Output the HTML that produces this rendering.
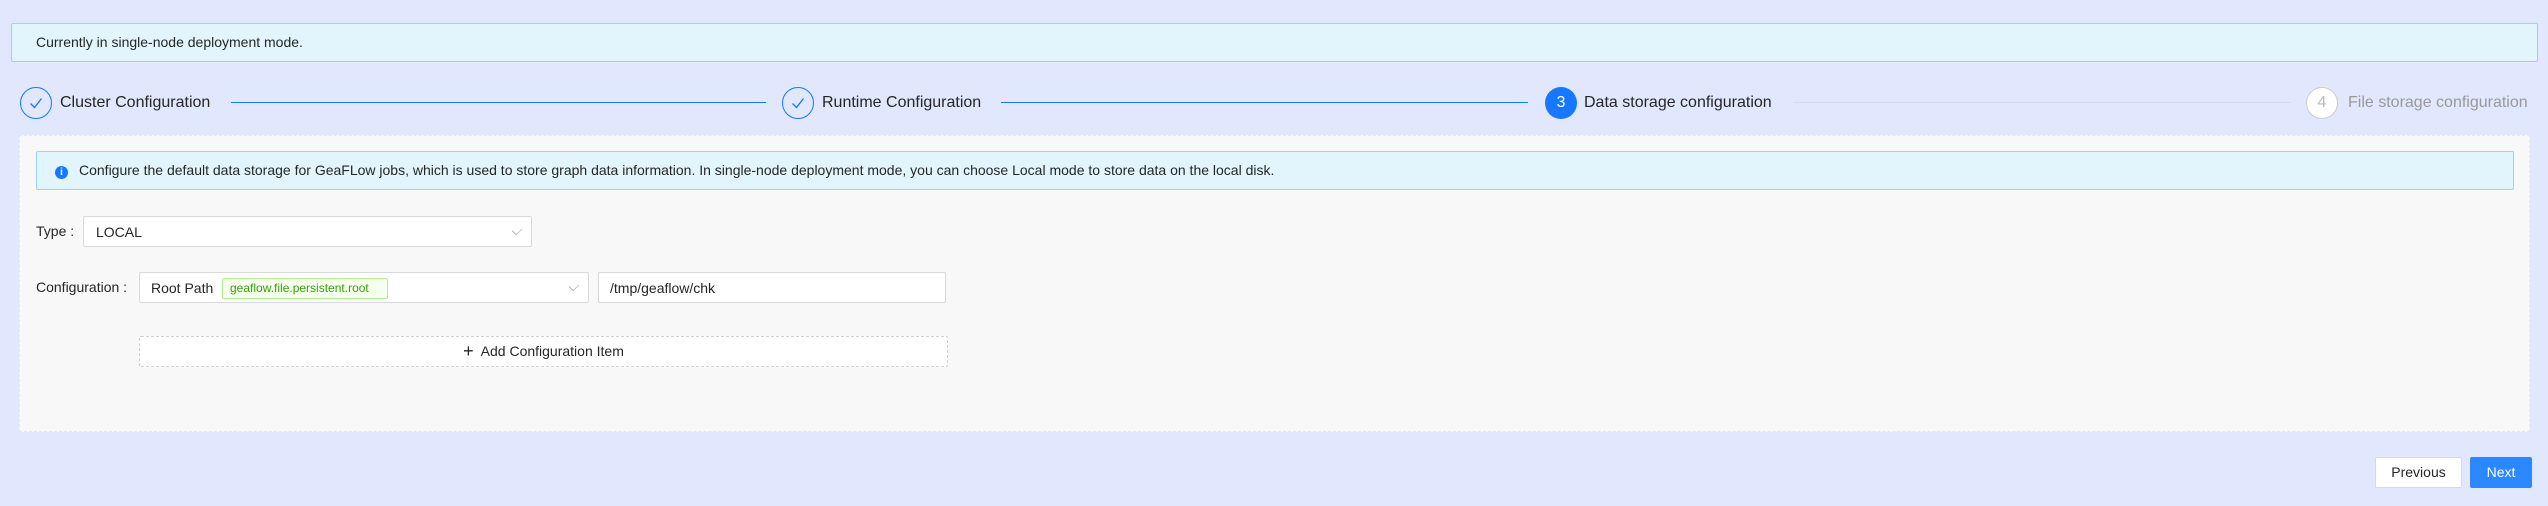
<!DOCTYPE html>
<html><head><meta charset="utf-8"><style>
*{box-sizing:border-box;margin:0;padding:0}
body{width:2548px;height:506px;background:#e1e7fd;font-family:"Liberation Sans",sans-serif;font-size:14px;color:#262626;position:relative;overflow:hidden}
.abs{position:absolute}
.alert{background:#e2f5fd;border:1px solid #91d5ff;border-radius:2px}
.circ{position:absolute;width:32px;height:32px;border-radius:50%;top:87px;text-align:center;line-height:30px;font-size:16px}
.st{position:absolute;top:92px;font-size:16px;line-height:22px}
.line{position:absolute;top:102px;height:1px}
.sel{position:absolute;background:#fff;border:1px solid #d9d9d9;border-radius:2px}
.arr{position:absolute;right:10px;top:9px;width:8px;height:8px;border-right:1px solid #bbb;border-bottom:1px solid #bbb;transform:rotate(45deg) scale(0.8,1.1)}
</style></head><body>
<div class="abs alert" style="left:11px;top:23px;width:2527px;height:39px;"><span class="abs" style="left:24px;top:10px">Currently in single-node deployment mode.</span></div>

<div class="circ" style="left:20px;border:1px solid #1677ff;color:#1677ff"><svg width="30" height="30" viewBox="0 0 30 30"><path d="M9.5 15.5l4 4 7-9" fill="none" stroke="#1677ff" stroke-width="1.3"/></svg></div>
<div class="st" style="left:60px">Cluster Configuration</div>
<div class="line" style="left:231px;width:535px;background:#1677ff"></div>
<div class="circ" style="left:782px;border:1px solid #1677ff"><svg width="30" height="30" viewBox="0 0 30 30"><path d="M9.5 15.5l4 4 7-9" fill="none" stroke="#1677ff" stroke-width="1.3"/></svg></div>
<div class="st" style="left:822px">Runtime Configuration</div>
<div class="line" style="left:1001px;width:527px;background:#1677ff"></div>
<div class="circ" style="left:1545px;background:#1677ff;color:#fff;line-height:32px">3</div>
<div class="st" style="left:1584px">Data storage configuration</div>
<div class="line" style="left:1794px;width:497px;background:#d6dbef"></div>
<div class="circ" style="left:2306px;border:1px solid #ccc;background:#fff;color:#bbb">4</div>
<div class="st" style="left:2348px;color:#999">File storage configuration</div>

<div class="abs" style="left:19px;top:135px;width:2511px;height:297px;background:#f8f8f8;border:1px dashed #e6e6e6"></div>
<div class="abs alert" style="left:36px;top:151px;width:2478px;height:39px;">
<div class="abs" style="left:18px;top:14px;width:13px;height:13px;border-radius:50%;background:#1677ff;color:#fff;font-size:10px;line-height:13px;text-align:center;font-weight:bold">i</div>
<span class="abs" style="left:42px;top:10px">Configure the default data storage for GeaFLow jobs, which is used to store graph data information. In single-node deployment mode, you can choose Local mode to store data on the local disk.</span></div>

<div class="abs" style="left:36px;top:223px">Type :</div>
<div class="sel" style="left:83px;top:216px;width:449px;height:31px"><span class="abs" style="left:12px;top:7px">LOCAL</span><div class="arr"></div></div>

<div class="abs" style="left:36px;top:279px">Configuration :</div>
<div class="sel" style="left:139px;top:272px;width:450px;height:31px"><span class="abs" style="left:11px;top:7px">Root Path</span>
<span class="abs" style="left:82px;top:5px;width:166px;height:21px;background:#f6ffed;border:1px solid #b7eb8f;color:#389e0d;font-size:12px;line-height:19px;padding-left:7px;border-radius:2px">geaflow.file.persistent.root</span><div class="arr"></div></div>
<div class="sel" style="left:598px;top:272px;width:348px;height:31px"><span class="abs" style="left:11px;top:7px">/tmp/geaflow/chk</span></div>

<div class="abs" style="left:139px;top:336px;width:809px;height:31px;background:#fff;border:1px dashed #d0d0d0;border-radius:2px;text-align:center;line-height:29px"><span style="font-size:18px;vertical-align:-1px">+</span>&nbsp; Add Configuration Item</div>

<div class="abs" style="left:2375px;top:457px;width:87px;height:31px;background:#fff;border:1px solid #d9d9d9;border-radius:2px;text-align:center;line-height:29px">Previous</div>
<div class="abs" style="left:2470px;top:457px;width:62px;height:31px;background:#2b88fe;border-radius:2px;color:#fff;text-align:center;line-height:31px">Next</div>
</body></html>
